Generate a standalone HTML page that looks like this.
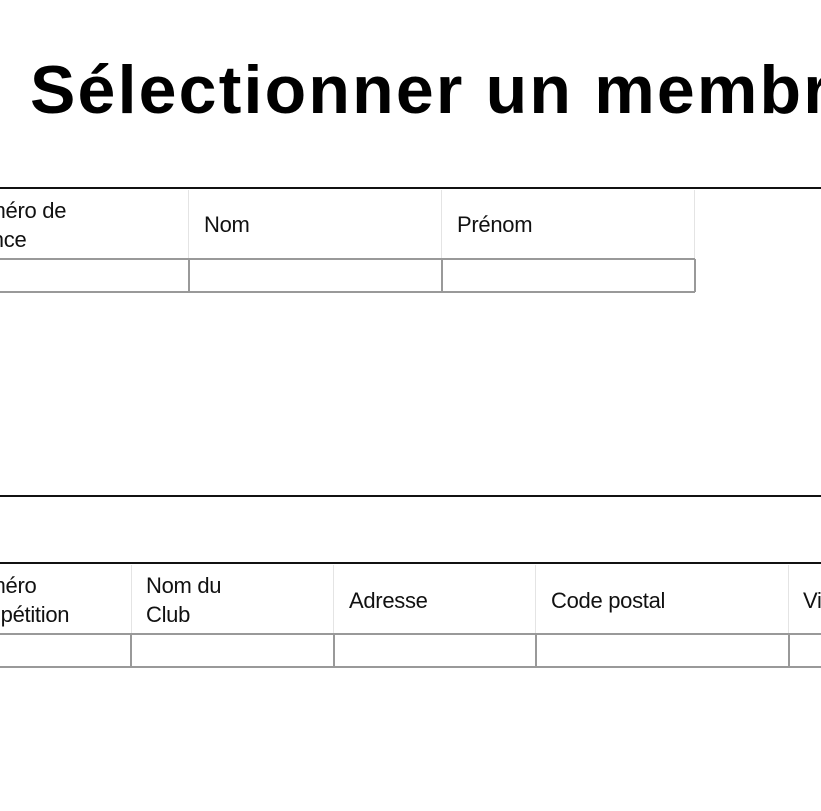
<!DOCTYPE html>
<html><head><meta charset="utf-8"><style>
html,body{margin:0;width:821px;height:811px;overflow:hidden;background:#fff;position:relative;font-family:"Liberation Sans",Arial,sans-serif;}
h1{position:absolute;left:30px;top:50px;width:791px;overflow:hidden;margin:0;font-size:68px;line-height:80px;font-weight:bold;white-space:nowrap;color:#000;letter-spacing:2.2px}
.hl{position:absolute;left:0;width:821px;height:2px;background:#111}
.t{position:absolute;font-size:22px;color:#111;line-height:29px;white-space:nowrap;letter-spacing:-0.3px;overflow:hidden}
.v{position:absolute;width:1px;background:#e4e4e4}
.vd{position:absolute;width:2px;background:#999}
.h{position:absolute;height:2px;background:#999}
</style></head><body>
<h1>Sélectionner un membre</h1>
<div class="hl" style="top:187px"></div>
<div class="v" style="left:188px;top:190px;height:69px"></div>
<div class="v" style="left:441px;top:190px;height:69px"></div>
<div class="v" style="left:694px;top:190px;height:69px"></div>
<div class="h" style="left:0;width:695px;top:258px"></div>
<div class="h" style="left:0;width:695px;top:291px"></div>
<div class="vd" style="left:188px;top:259px;height:33px"></div>
<div class="vd" style="left:441px;top:259px;height:33px"></div>
<div class="vd" style="left:694px;top:259px;height:33px"></div>
<div class="t" style="left:0;top:196px;width:180px"><div style="margin-left:-40px">Numéro de<br>licence</div></div>
<div class="t" style="left:204px;top:210px">Nom</div>
<div class="t" style="left:457px;top:210px">Prénom</div>

<div class="hl" style="top:495px"></div>
<div class="hl" style="top:562px"></div>
<div class="v" style="left:131px;top:565px;height:69px"></div>
<div class="v" style="left:333px;top:565px;height:69px"></div>
<div class="v" style="left:535px;top:565px;height:69px"></div>
<div class="v" style="left:788px;top:565px;height:69px"></div>
<div class="h" style="left:0;width:821px;top:633px"></div>
<div class="h" style="left:0;width:821px;top:666px"></div>
<div class="vd" style="left:130px;top:634px;height:33px"></div>
<div class="vd" style="left:333px;top:634px;height:33px"></div>
<div class="vd" style="left:535px;top:634px;height:33px"></div>
<div class="vd" style="left:788px;top:634px;height:33px"></div>
<div class="t" style="left:0;top:571px;width:125px"><div style="margin-left:-40px">Numéro<br>compétition</div></div>
<div class="t" style="left:146px;top:571px">Nom du<br>Club</div>
<div class="t" style="left:349px;top:586px">Adresse</div>
<div class="t" style="left:551px;top:586px">Code postal</div>
<div class="t" style="left:803px;top:586px;width:18px">Ville</div>
</body></html>
